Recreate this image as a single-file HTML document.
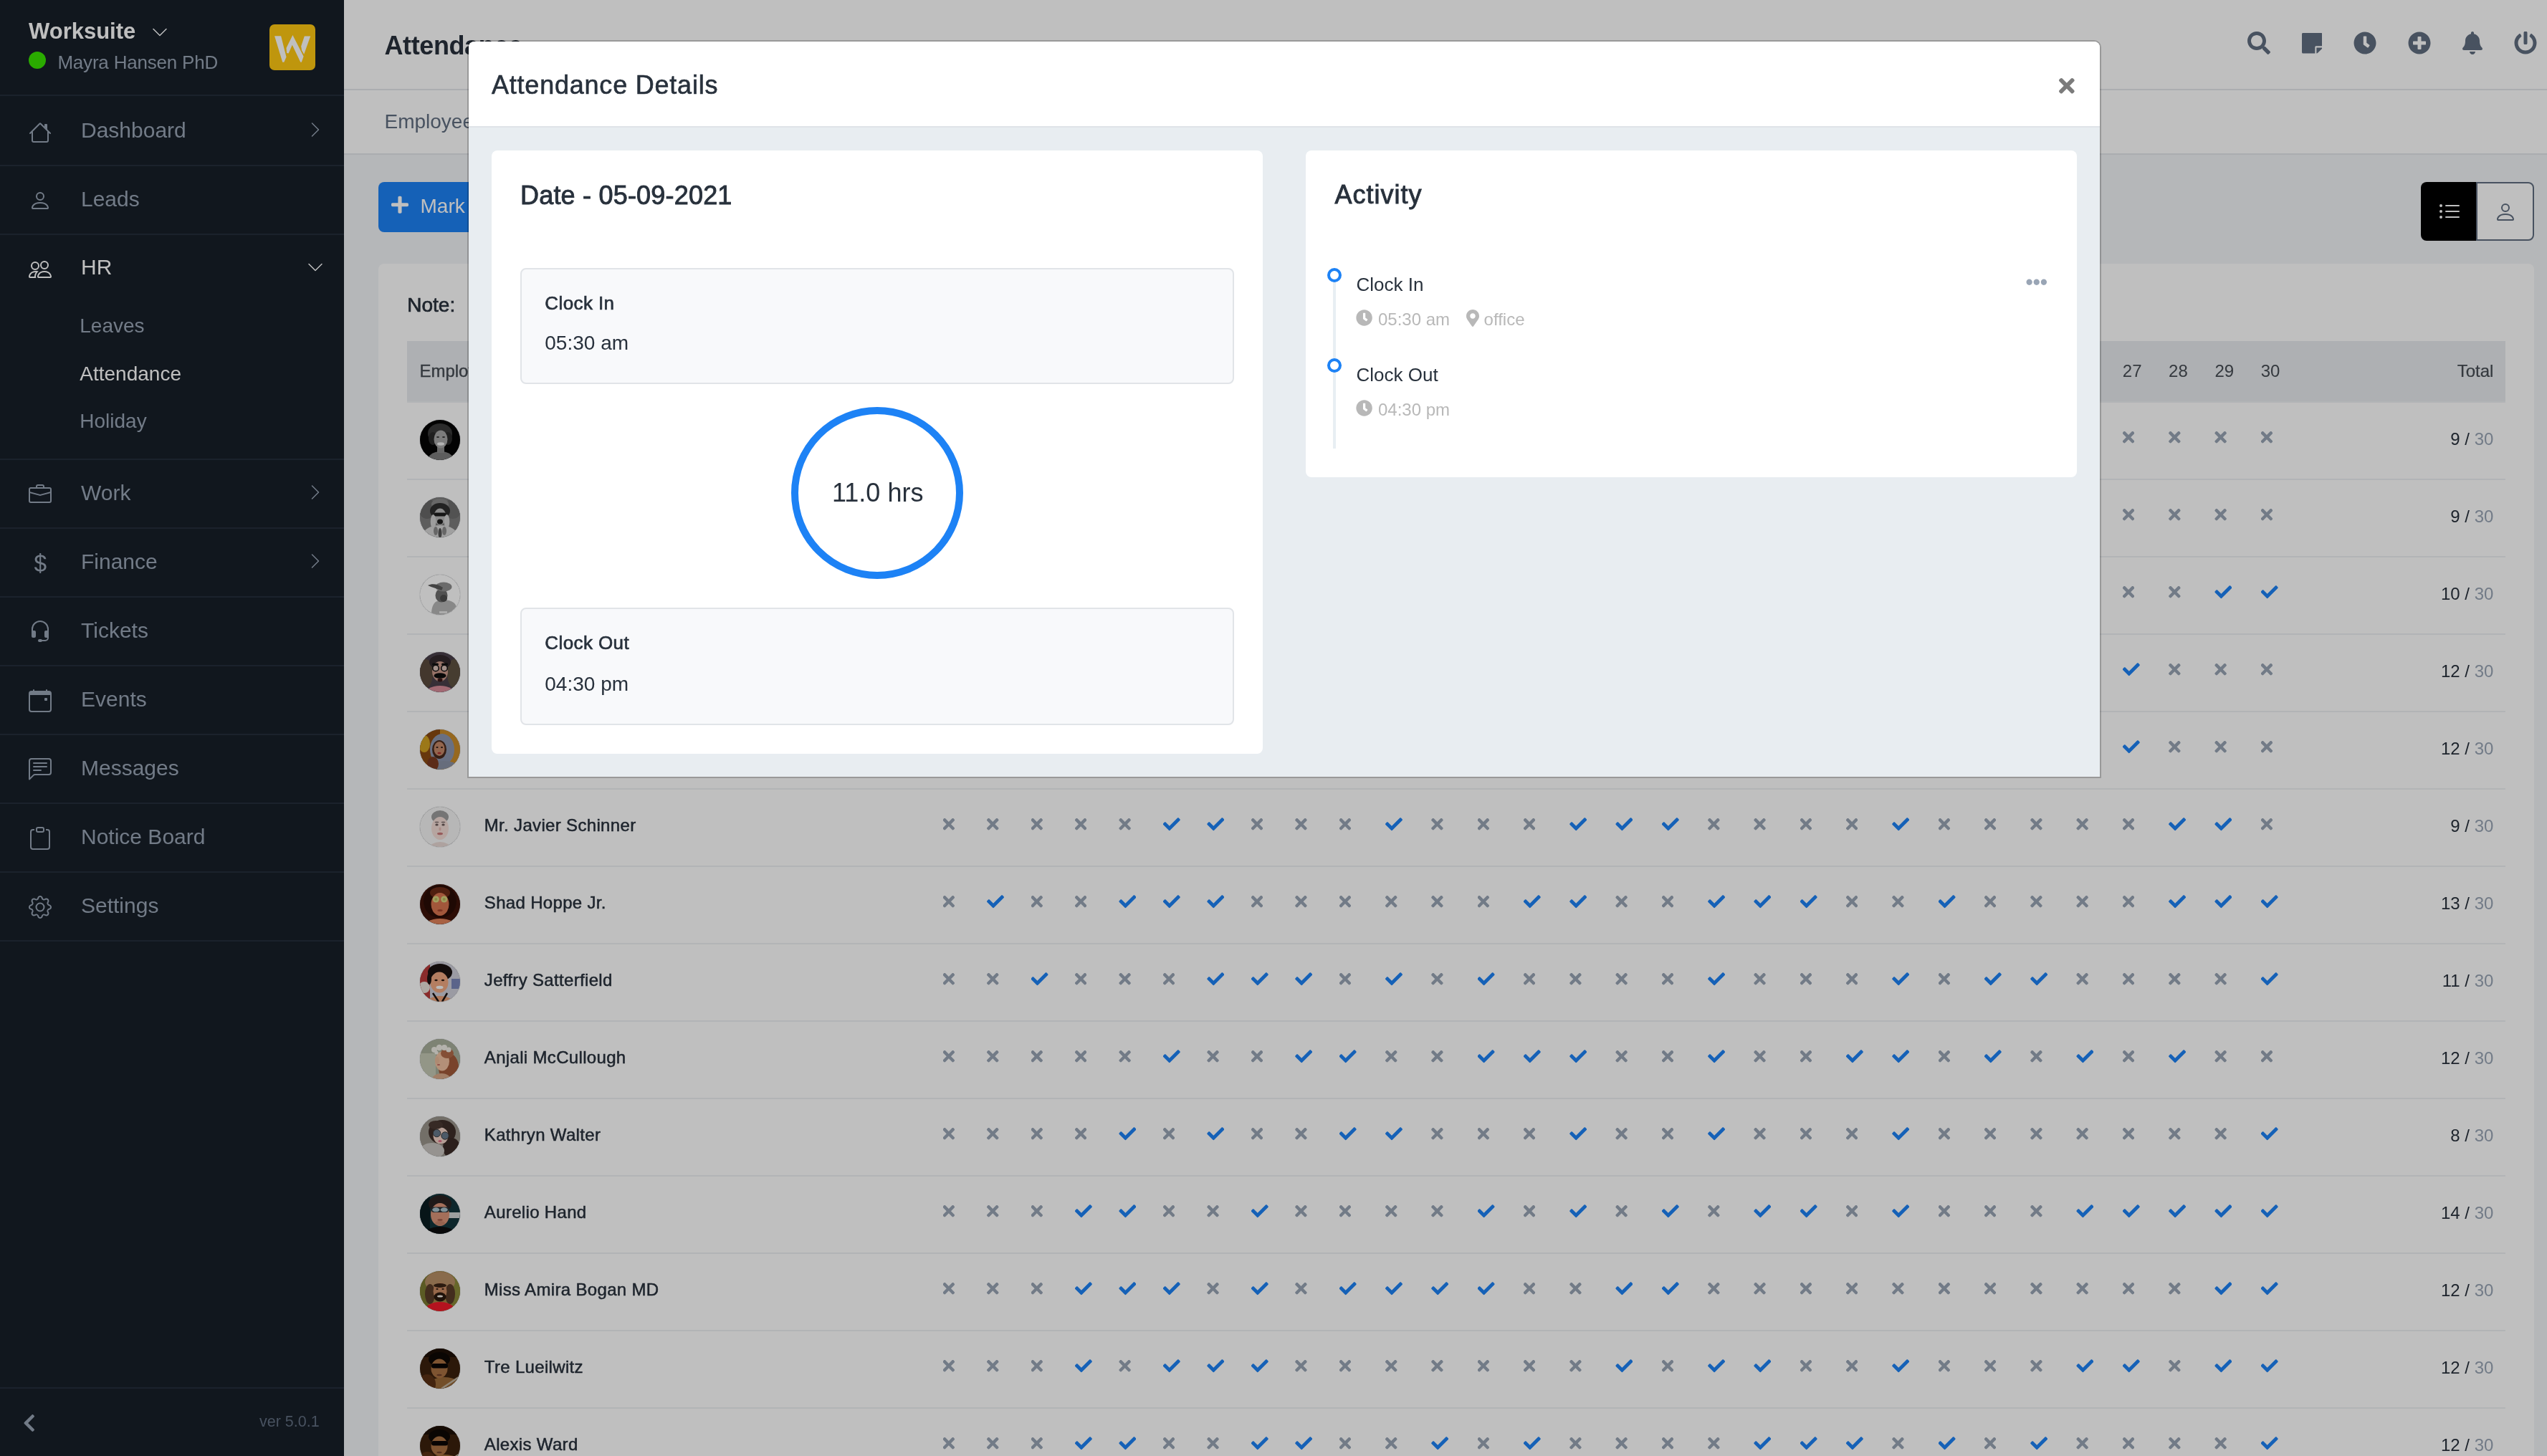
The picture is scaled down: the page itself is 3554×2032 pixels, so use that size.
<!DOCTYPE html>
<html lang="en"><head><meta charset="utf-8"><title>Attendance</title>
<style>
html,body{margin:0;padding:0}
html{overflow:hidden}
body{width:3554px;height:2032px;overflow:hidden;position:relative;background:#f2f4f7;font-family:"Liberation Sans",sans-serif}
.t{position:absolute;line-height:1;white-space:nowrap}
.abs{position:absolute}
svg{display:block}
</style></head><body>
<div id="root" style="position:absolute;left:0;top:0;width:3554px;height:2032px;overflow:hidden;will-change:transform">

<div class="abs" style="left:480px;top:0;width:3074px;height:124px;background:#fff;border-bottom:2px solid #e4e7eb"></div>
<div class="abs" style="left:480px;top:126px;width:3074px;height:88px;background:#fff;border-bottom:2px solid #e4e7eb"></div>
<div class="t" style="left:536.5px;top:45.53px;font-size:36px;color:#28313c;font-weight:bold;letter-spacing:-0.4px">Attendance</div>
<div class="t" style="left:536.5px;top:155.90px;font-size:28px;color:#616e80;font-weight:normal;">Employee</div>
<svg style="position:absolute;left:3136px;top:44px;" width="32.00" height="32" viewBox="0 0 512 512" fill="#616e80"><path d="M505 442.700L405.300 343c-4.500-4.500-10.600-7-17-7H372c27.600-35.300 44-79.700 44-128C416 93.100 322.900 0 208 0S0 93.100 0 208s93.100 208 208 208c48.300 0 92.700-16.400 128-44v16.300c0 6.400 2.500 12.500 7 17l99.700 99.700c9.400 9.400 24.600 9.400 33.900 0l28.300-28.300c9.400-9.400 9.400-24.600.100-34zM208 336c-70.700 0-128-57.200-128-128 0-70.700 57.200-128 128-128 70.700 0 128 57.200 128 128 0 70.700-57.200 128-128 128z"/></svg>
<svg style="position:absolute;left:3211.7px;top:43.6px;" width="28.53" height="32.6" viewBox="0 0 448 512" fill="#616e80"><path d="M312 320h136V56c0-13.300-10.700-24-24-24H24C10.700 32 0 42.700 0 56v400c0 13.300 10.700 24 24 24h264V344c0-13.200 10.800-24 24-24zm129 55l-98 98c-4.500 4.500-10.600 7-17 7h-6V352h128v6.100c0 6.300-2.500 12.400-7 16.900z"/></svg>
<svg style="position:absolute;left:3284px;top:44px;" width="32.00" height="32" viewBox="0 0 512 512" fill="#616e80"><path d="M256 8C119 8 8 119 8 256s111 248 248 248 248-111 248-248S393 8 256 8zm57.100 350.100L224.900 294c-3.100-2.300-4.900-5.900-4.900-9.700V116c0-6.600 5.400-12 12-12h48c6.600 0 12 5.400 12 12v137.700l63.500 46.200c5.400 3.900 6.500 11.400 2.600 16.800l-28.200 38.800c-3.900 5.300-11.400 6.500-16.800 2.600z"/></svg>
<svg style="position:absolute;left:3360px;top:44px;" width="32.00" height="32" viewBox="0 0 512 512" fill="#616e80"><path d="M256 8C119 8 8 119 8 256s111 248 248 248 248-111 248-248S393 8 256 8zm144 276c0 6.600-5.400 12-12 12h-92v92c0 6.600-5.400 12-12 12h-56c-6.600 0-12-5.400-12-12v-92h-92c-6.600 0-12-5.400-12-12v-56c0-6.600 5.400-12 12-12h92v-92c0-6.600 5.400-12 12-12h56c6.600 0 12 5.400 12 12v92h92c6.600 0 12 5.400 12 12v56z"/></svg>
<svg style="position:absolute;left:3435.8px;top:44px;" width="28.00" height="32" viewBox="0 0 448 512" fill="#616e80"><path d="M224 512c35.320 0 63.970-28.650 63.970-64H160.030c0 35.350 28.650 64 63.970 64zm215.390-149.710c-19.320-20.760-55.470-51.990-55.470-154.290 0-77.700-54.480-139.900-127.940-155.160V32c0-17.670-14.320-32-31.980-32s-31.980 14.330-31.980 32v20.840C118.560 68.100 64.080 130.300 64.080 208c0 102.300-36.150 133.530-55.470 154.290-6 6.450-8.660 14.160-8.610 21.710.110 16.400 12.980 32 32.100 32h383.800c19.120 0 32-15.600 32.100-32 .050-7.550-2.610-15.270-8.610-21.710z"/></svg>
<svg style="position:absolute;left:3508px;top:44px;" width="32.00" height="32" viewBox="0 0 512 512" fill="#616e80"><path d="M400 54.100c63 45 104 118.600 104 201.900 0 136.800-110.800 247.700-247.500 248C120 504.300 8.200 393 8 256.400 7.900 173.100 48.900 99.300 111.800 54.200c11.700-8.300 28-4.800 35 7.700L162.600 90c5.900 10.500 3.100 23.800-6.600 31-41.500 30.800-68 79.600-68 134.900-.100 92.300 74.500 168.100 168 168.100 91.600 0 168.600-74.200 168-169.100-.300-51.800-24.700-101.800-68.100-134-9.700-7.200-12.400-20.500-6.500-30.900l15.800-28.100c7-12.400 23.200-16.100 34.800-7.800zM296 264V24c0-13.300-10.700-24-24-24h-32c-13.300 0-24 10.700-24 24v240c0 13.300 10.700 24 24 24h32c13.300 0 24-10.700 24-24z"/></svg>
<div class="abs" style="left:528px;top:254px;width:330px;height:70px;border-radius:8px;background:#1d82f5"></div>
<svg style="position:absolute;left:546px;top:271.7px;" width="23.97" height="27.4" viewBox="0 0 448 512" fill="#fff"><path d="M416 208H272V64c0-17.670-14.330-32-32-32h-32c-17.670 0-32 14.330-32 32v144H32c-17.670 0-32 14.330-32 32v32c0 17.670 14.330 32 32 32h144v144c0 17.670 14.330 32 32 32h32c17.670 0 32-14.330 32-32V304h144c17.670 0 32-14.330 32-32v-32c0-17.670-14.330-32-32-32z"/></svg>
<div class="t" style="left:586.5px;top:274.00px;font-size:28px;color:#fff;font-weight:normal;">Mark Attendance</div>
<div class="abs" style="left:3378px;top:254px;width:79px;height:82px;background:#000;border-radius:8px 0 0 8px"></div>
<div class="abs" style="left:3455px;top:254px;width:77px;height:78px;border:2px solid #616e80;border-radius:0 8px 8px 0;background:#fff"></div>
<svg style="position:absolute;left:3402px;top:279.5px" width="32" height="32" viewBox="0 0 16 16" fill="#fff"><path fill-rule="evenodd" d="M5 11.500a.5.5 0 0 1 .5-.5h9a.5.5 0 0 1 0 1h-9a.5.5 0 0 1-.5-.5zm0-4a.5.5 0 0 1 .5-.5h9a.5.5 0 0 1 0 1h-9a.5.5 0 0 1-.5-.5zm0-4a.5.5 0 0 1 .5-.5h9a.5.5 0 0 1 0 1h-9a.5.5 0 0 1-.5-.5zm-3 1a1 1 0 1 0 0-2 1 1 0 0 0 0 2zm0 4a1 1 0 1 0 0-2 1 1 0 0 0 0 2zm0 4a1 1 0 1 0 0-2 1 1 0 0 0 0 2z"/></svg>
<svg style="position:absolute;left:3480px;top:280px" width="32" height="32" viewBox="0 0 16 16" fill="#616e80"><path d="M8 8a3 3 0 1 0 0-6 3 3 0 0 0 0 6zm2-3a2 2 0 1 1-4 0 2 2 0 0 1 4 0zm4 8c0 1-1 1-1 1H3s-1 0-1-1 1-4 6-4 6 3 6 4zm-1-.004c-.001-.246-.154-.986-.832-1.664C11.516 10.68 10.289 10 8 10c-2.29 0-3.516.68-4.168 1.332-.678.678-.83 1.418-.832 1.664h10z"/></svg>
<div class="abs" style="left:528px;top:368px;width:3008px;height:1664px;background:#fff;border-radius:8px 8px 0 0"></div>
<div class="t" style="left:568.3px;top:412.30px;font-size:28px;color:#28313c;font-weight:normal;-webkit-text-stroke:0.7px #28313c">Note:</div>
<div class="abs" style="left:568px;top:476px;width:2928px;height:84px;background:#e8ebef;border-bottom:2px solid #eef0f3"></div>
<div class="t" style="left:585.4px;top:505.88px;font-size:24px;color:#474d54;font-weight:normal;-webkit-text-stroke:0.4px #474d54">Employee</div>
<div class="t" style="left:1315.6px;top:505.88px;font-size:24px;color:#474d54;font-weight:normal;">1</div>
<div class="t" style="left:1377.0px;top:505.88px;font-size:24px;color:#474d54;font-weight:normal;">2</div>
<div class="t" style="left:1438.5px;top:505.88px;font-size:24px;color:#474d54;font-weight:normal;">3</div>
<div class="t" style="left:1499.9px;top:505.88px;font-size:24px;color:#474d54;font-weight:normal;">4</div>
<div class="t" style="left:1561.4px;top:505.88px;font-size:24px;color:#474d54;font-weight:normal;">5</div>
<div class="t" style="left:1622.8px;top:505.88px;font-size:24px;color:#474d54;font-weight:normal;">6</div>
<div class="t" style="left:1684.3px;top:505.88px;font-size:24px;color:#474d54;font-weight:normal;">7</div>
<div class="t" style="left:1745.8px;top:505.88px;font-size:24px;color:#474d54;font-weight:normal;">8</div>
<div class="t" style="left:1807.2px;top:505.88px;font-size:24px;color:#474d54;font-weight:normal;">9</div>
<div class="t" style="left:1868.7px;top:505.88px;font-size:24px;color:#474d54;font-weight:normal;">10</div>
<div class="t" style="left:1933.0px;top:505.88px;font-size:24px;color:#474d54;font-weight:normal;">11</div>
<div class="t" style="left:1997.2px;top:505.88px;font-size:24px;color:#474d54;font-weight:normal;">12</div>
<div class="t" style="left:2061.6px;top:505.88px;font-size:24px;color:#474d54;font-weight:normal;">13</div>
<div class="t" style="left:2125.8px;top:505.88px;font-size:24px;color:#474d54;font-weight:normal;">14</div>
<div class="t" style="left:2190.2px;top:505.88px;font-size:24px;color:#474d54;font-weight:normal;">15</div>
<div class="t" style="left:2254.4px;top:505.88px;font-size:24px;color:#474d54;font-weight:normal;">16</div>
<div class="t" style="left:2318.8px;top:505.88px;font-size:24px;color:#474d54;font-weight:normal;">17</div>
<div class="t" style="left:2383.1px;top:505.88px;font-size:24px;color:#474d54;font-weight:normal;">18</div>
<div class="t" style="left:2447.3px;top:505.88px;font-size:24px;color:#474d54;font-weight:normal;">19</div>
<div class="t" style="left:2511.7px;top:505.88px;font-size:24px;color:#474d54;font-weight:normal;">20</div>
<div class="t" style="left:2575.9px;top:505.88px;font-size:24px;color:#474d54;font-weight:normal;">21</div>
<div class="t" style="left:2640.2px;top:505.88px;font-size:24px;color:#474d54;font-weight:normal;">22</div>
<div class="t" style="left:2704.6px;top:505.88px;font-size:24px;color:#474d54;font-weight:normal;">23</div>
<div class="t" style="left:2768.8px;top:505.88px;font-size:24px;color:#474d54;font-weight:normal;">24</div>
<div class="t" style="left:2833.2px;top:505.88px;font-size:24px;color:#474d54;font-weight:normal;">25</div>
<div class="t" style="left:2897.4px;top:505.88px;font-size:24px;color:#474d54;font-weight:normal;">26</div>
<div class="t" style="left:2961.8px;top:505.88px;font-size:24px;color:#474d54;font-weight:normal;">27</div>
<div class="t" style="left:3026.1px;top:505.88px;font-size:24px;color:#474d54;font-weight:normal;">28</div>
<div class="t" style="left:3090.4px;top:505.88px;font-size:24px;color:#474d54;font-weight:normal;">29</div>
<div class="t" style="left:3154.7px;top:505.88px;font-size:24px;color:#474d54;font-weight:normal;">30</div>
<div class="t" style="right:74.59999999999991px;top:505.88px;font-size:24px;color:#474d54;font-weight:normal;-webkit-text-stroke:0.2px #474d54">Total</div>
<style>.ix,.ic{position:absolute;height:24px}.ix{width:16.5px;background:#99a5b5;clip-path:path("M 11.377 12 l 4.691 -4.691 c 0.576 -0.576 0.576 -1.509 0 -2.085 l -1.042 -1.042 c -0.576 -0.576 -1.509 -0.576 -2.085 0 L 8.25 8.873 3.559 4.182 c -0.576 -0.576 -1.509 -0.576 -2.085 0 L 0.432 5.224 c -0.576 0.576 -0.576 1.509 0 2.085 L 5.123 12 0.432 16.691 c -0.576 0.576 -0.576 1.509 0 2.085 l 1.042 1.042 c 0.576 0.576 1.509 0.576 2.085 0 L 8.25 15.128 l 4.691 4.691 c 0.576 0.576 1.509 0.576 2.085 0 l 1.042 -1.042 c 0.576 -0.576 0.576 -1.509 0 -2.085 L 11.377 12 z")}.ic{width:24px;background:#1d82f5;clip-path:path("M 8.151 20.597 l -7.8 -7.8 c -0.469 -0.469 -0.469 -1.228 0 -1.697 l 1.697 -1.697 c 0.469 -0.469 1.228 -0.469 1.697 0 L 9 14.657 20.254 3.403 c 0.469 -0.469 1.228 -0.469 1.697 0 l 1.697 1.697 c 0.469 0.469 0.469 1.228 0 1.697 l -13.8 13.8 c -0.469 0.469 -1.228 0.469 -1.697 -0 z")}</style>
<div class="abs" style="left:568px;top:668px;width:2928px;height:2px;background:#eef0f3"></div>
<div class="abs av" id="av1" style="left:585px;top:585px;width:56px;height:56px;border-radius:50%;border:1px solid #f3f4f6;background:#888;overflow:hidden"><svg width="56" height="56" viewBox="0 0 56 56"><rect x="0" y="0" width="56" height="56" fill="#050505" /><ellipse cx="28" cy="19" rx="17" ry="14" fill="#3a3a3a" /><ellipse cx="18" cy="26" rx="6" ry="9" fill="#2a2a2a" /><ellipse cx="39" cy="26" rx="6" ry="9" fill="#2a2a2a" /><ellipse cx="29" cy="58" rx="19" ry="14" fill="#7c7c7c" /><rect x="24" y="36" width="10" height="10" fill="#8a8a8a" /><ellipse cx="29" cy="27" rx="9.5" ry="12.5" fill="#a6a6a6" /><ellipse cx="25" cy="24" rx="2" ry="1" fill="#333" /><ellipse cx="33" cy="24" rx="2" ry="1" fill="#333" /><ellipse cx="29" cy="33.5" rx="5" ry="2.2" fill="#f0f0f0" /></svg></div>
<i class="ix" style="left:2961.8px;top:598.2px"></i>
<i class="ix" style="left:3026.1px;top:598.2px"></i>
<i class="ix" style="left:3090.4px;top:598.2px"></i>
<i class="ix" style="left:3154.7px;top:598.2px"></i>
<div class="t" style="right:74.59999999999991px;top:601.08px;font-size:24px;color:#28313c">9 / <span style="color:#99a5b5">30</span></div>
<div class="abs" style="left:568px;top:776px;width:2928px;height:2px;background:#eef0f3"></div>
<div class="abs av" id="av2" style="left:585px;top:693px;width:56px;height:56px;border-radius:50%;border:1px solid #f3f4f6;background:#888;overflow:hidden"><svg width="56" height="56" viewBox="0 0 56 56"><rect x="0" y="0" width="56" height="56" fill="#7c7c7c" /><ellipse cx="10" cy="16" rx="12" ry="14" fill="#686868" /><ellipse cx="46" cy="16" rx="12" ry="14" fill="#6e6e6e" /><ellipse cx="28" cy="10" rx="12" ry="8" fill="#8a8a8a" /><ellipse cx="28" cy="56" rx="26" ry="17" fill="#d6d6d6" /><ellipse cx="28" cy="19" rx="14" ry="11" fill="#2e2e2e" /><ellipse cx="28" cy="27" rx="8.5" ry="11.5" fill="#b8b8b8" /><rect x="19.5" y="21.5" width="17" height="5" fill="#1c1c1c" rx="2.5"/><ellipse cx="28" cy="34" rx="4" ry="3.6" fill="#1e1e1e" /><ellipse cx="18.5" cy="34" rx="3.8" ry="10" fill="#d2d2d2" /><ellipse cx="37.5" cy="34" rx="3.8" ry="10" fill="#d2d2d2" /><ellipse cx="22" cy="47" rx="3" ry="6" fill="#8a8a8a" /><ellipse cx="34" cy="47" rx="3" ry="6" fill="#8a8a8a" /><ellipse cx="28" cy="50" rx="2.5" ry="7" fill="#555" /></svg></div>
<i class="ix" style="left:2961.8px;top:706.2px"></i>
<i class="ix" style="left:3026.1px;top:706.2px"></i>
<i class="ix" style="left:3090.4px;top:706.2px"></i>
<i class="ix" style="left:3154.7px;top:706.2px"></i>
<div class="t" style="right:74.59999999999991px;top:709.08px;font-size:24px;color:#28313c">9 / <span style="color:#99a5b5">30</span></div>
<div class="abs" style="left:568px;top:884px;width:2928px;height:2px;background:#eef0f3"></div>
<div class="abs av" id="av3" style="left:585px;top:801px;width:56px;height:56px;border-radius:50%;border:1px solid #f3f4f6;background:#888;overflow:hidden"><svg width="56" height="56" viewBox="0 0 56 56"><rect x="0" y="0" width="56" height="56" fill="#ffffff" /><path d="M20 40c3-5 18-7 27-1 4 3 5 9 5 17H16c0-7 1-12 4-16z" fill="#b6b6b6"/><ellipse cx="30" cy="29" rx="8.5" ry="9.5" fill="#6c6c6c" /><ellipse cx="33" cy="33" rx="5" ry="5" fill="#4e4e4e" /><ellipse cx="33" cy="17" rx="11.5" ry="6.5" fill="#8e8e8e" /><path d="M11 15c6-3 14-2 21 3l-2 4c-7-3-13-4-19-7z" fill="#585858"/><rect x="27" y="51" width="11" height="3" fill="#e6e6e6" /></svg></div>
<i class="ix" style="left:2961.8px;top:814.2px"></i>
<i class="ix" style="left:3026.1px;top:814.2px"></i>
<i class="ic" style="left:3090.4px;top:814.2px"></i>
<i class="ic" style="left:3154.7px;top:814.2px"></i>
<div class="t" style="right:74.59999999999991px;top:817.08px;font-size:24px;color:#28313c">10 / <span style="color:#99a5b5">30</span></div>
<div class="abs" style="left:568px;top:992px;width:2928px;height:2px;background:#eef0f3"></div>
<div class="abs av" id="av4" style="left:585px;top:909px;width:56px;height:56px;border-radius:50%;border:1px solid #f3f4f6;background:#888;overflow:hidden"><svg width="56" height="56" viewBox="0 0 56 56"><rect x="0" y="0" width="56" height="56" fill="#4a3f4a" /><ellipse cx="8" cy="30" rx="10" ry="20" fill="#5a4a3c" /><ellipse cx="48" cy="30" rx="10" ry="20" fill="#5e5240" /><ellipse cx="28" cy="14" rx="15" ry="10" fill="#33282c" /><ellipse cx="28" cy="60" rx="22" ry="13" fill="#d98c9a" /><ellipse cx="28" cy="27" rx="11" ry="14" fill="#c8988a" /><rect x="17" y="15.5" width="9" height="3" fill="#111" rx="1.5"/><rect x="30" y="15.5" width="9" height="3" fill="#111" rx="1.5"/><circle cx="22" cy="22.5" r="4.3" fill="#d8c0b8" stroke="#111" stroke-width="1.6"/><circle cx="34" cy="22.5" r="4.3" fill="#d8c0b8" stroke="#111" stroke-width="1.6"/><ellipse cx="28" cy="33" rx="8.5" ry="3.8" fill="#0c0c0c" /><ellipse cx="28" cy="39" rx="3.5" ry="2.5" fill="#3a1818" /></svg></div>
<i class="ic" style="left:2961.8px;top:922.2px"></i>
<i class="ix" style="left:3026.1px;top:922.2px"></i>
<i class="ix" style="left:3090.4px;top:922.2px"></i>
<i class="ix" style="left:3154.7px;top:922.2px"></i>
<div class="t" style="right:74.59999999999991px;top:925.08px;font-size:24px;color:#28313c">12 / <span style="color:#99a5b5">30</span></div>
<div class="abs" style="left:568px;top:1100px;width:2928px;height:2px;background:#eef0f3"></div>
<div class="abs av" id="av5" style="left:585px;top:1017px;width:56px;height:56px;border-radius:50%;border:1px solid #f3f4f6;background:#888;overflow:hidden"><svg width="56" height="56" viewBox="0 0 56 56"><rect x="0" y="0" width="28" height="56" fill="#8a4a12" /><rect x="28" y="0" width="28" height="56" fill="#c98b2a" /><ellipse cx="6" cy="20" rx="8" ry="12" fill="#d0a020" /><ellipse cx="31" cy="28" rx="17" ry="22" fill="#8d96ae" /><ellipse cx="34" cy="56" rx="22" ry="12" fill="#8a92a6" /><ellipse cx="27" cy="28" rx="10" ry="13" fill="#4a2a1c" /><ellipse cx="27" cy="27" rx="7.5" ry="10" fill="#c48868" /><ellipse cx="27" cy="33" rx="2.6" ry="1.3" fill="#b03030" /><ellipse cx="24" cy="25" rx="1.6" ry="0.9" fill="#2a1a14" /><ellipse cx="30.5" cy="25" rx="1.6" ry="0.9" fill="#2a1a14" /><ellipse cx="18" cy="48" rx="8" ry="10" fill="#7a3a20" /></svg></div>
<i class="ic" style="left:2961.8px;top:1030.2px"></i>
<i class="ix" style="left:3026.1px;top:1030.2px"></i>
<i class="ix" style="left:3090.4px;top:1030.2px"></i>
<i class="ix" style="left:3154.7px;top:1030.2px"></i>
<div class="t" style="right:74.59999999999991px;top:1033.08px;font-size:24px;color:#28313c">12 / <span style="color:#99a5b5">30</span></div>
<div class="abs" style="left:568px;top:1208px;width:2928px;height:2px;background:#eef0f3"></div>
<div class="abs av" id="av6" style="left:585px;top:1125px;width:56px;height:56px;border-radius:50%;border:1px solid #f3f4f6;background:#888;overflow:hidden"><svg width="56" height="56" viewBox="0 0 56 56"><rect x="0" y="0" width="56" height="56" fill="#f4f4f4" /><ellipse cx="28" cy="14" rx="12" ry="9" fill="#9c9c9c" /><ellipse cx="28" cy="58" rx="15" ry="9" fill="#e8d8d4" /><ellipse cx="28" cy="30" rx="12" ry="16" fill="#f3dcd6" /><ellipse cx="23.5" cy="25" rx="2.2" ry="1.6" fill="#6a5a58" /><ellipse cx="32.5" cy="25" rx="2.2" ry="1.6" fill="#6a5a58" /><ellipse cx="23.5" cy="21.5" rx="3" ry="0.9" fill="#8a7a78" /><ellipse cx="32.5" cy="21.5" rx="3" ry="0.9" fill="#8a7a78" /><ellipse cx="28" cy="37.5" rx="4" ry="1.8" fill="#c87878" /><ellipse cx="28" cy="31" rx="1.6" ry="2.4" fill="#e4bcb4" /></svg></div>
<div class="t" style="left:675.8px;top:1139.68px;font-size:24px;color:#28313c;font-weight:normal;letter-spacing:0.33px;-webkit-text-stroke:0.5px #28313c">Mr. Javier Schinner</div>
<i class="ix" style="left:1315.6px;top:1138.2px"></i>
<i class="ix" style="left:1377.0px;top:1138.2px"></i>
<i class="ix" style="left:1438.5px;top:1138.2px"></i>
<i class="ix" style="left:1499.9px;top:1138.2px"></i>
<i class="ix" style="left:1561.4px;top:1138.2px"></i>
<i class="ic" style="left:1622.8px;top:1138.2px"></i>
<i class="ic" style="left:1684.3px;top:1138.2px"></i>
<i class="ix" style="left:1745.8px;top:1138.2px"></i>
<i class="ix" style="left:1807.2px;top:1138.2px"></i>
<i class="ix" style="left:1868.7px;top:1138.2px"></i>
<i class="ic" style="left:1933.0px;top:1138.2px"></i>
<i class="ix" style="left:1997.2px;top:1138.2px"></i>
<i class="ix" style="left:2061.6px;top:1138.2px"></i>
<i class="ix" style="left:2125.8px;top:1138.2px"></i>
<i class="ic" style="left:2190.2px;top:1138.2px"></i>
<i class="ic" style="left:2254.4px;top:1138.2px"></i>
<i class="ic" style="left:2318.8px;top:1138.2px"></i>
<i class="ix" style="left:2383.1px;top:1138.2px"></i>
<i class="ix" style="left:2447.3px;top:1138.2px"></i>
<i class="ix" style="left:2511.7px;top:1138.2px"></i>
<i class="ix" style="left:2575.9px;top:1138.2px"></i>
<i class="ic" style="left:2640.2px;top:1138.2px"></i>
<i class="ix" style="left:2704.6px;top:1138.2px"></i>
<i class="ix" style="left:2768.8px;top:1138.2px"></i>
<i class="ix" style="left:2833.2px;top:1138.2px"></i>
<i class="ix" style="left:2897.4px;top:1138.2px"></i>
<i class="ix" style="left:2961.8px;top:1138.2px"></i>
<i class="ic" style="left:3026.1px;top:1138.2px"></i>
<i class="ic" style="left:3090.4px;top:1138.2px"></i>
<i class="ix" style="left:3154.7px;top:1138.2px"></i>
<div class="t" style="right:74.59999999999991px;top:1141.08px;font-size:24px;color:#28313c">9 / <span style="color:#99a5b5">30</span></div>
<div class="abs" style="left:568px;top:1316px;width:2928px;height:2px;background:#eef0f3"></div>
<div class="abs av" id="av7" style="left:585px;top:1233px;width:56px;height:56px;border-radius:50%;border:1px solid #f3f4f6;background:#888;overflow:hidden"><svg width="56" height="56" viewBox="0 0 56 56"><rect x="0" y="0" width="56" height="56" fill="#3c1209" /><ellipse cx="28" cy="24" rx="23" ry="23" fill="#2a0c06" /><ellipse cx="28" cy="12" rx="14" ry="8" fill="#6a2a16" /><ellipse cx="28" cy="62" rx="24" ry="14" fill="#e0825a" /><ellipse cx="28" cy="28" rx="12.5" ry="16" fill="#d9754f" /><circle cx="22.3" cy="21" r="4.6" fill="#d6d47e"/><circle cx="33.700" cy="21" r="4.6" fill="#d6d47e"/><circle cx="22.3" cy="21" r="2" fill="#b8b45e"/><circle cx="33.700" cy="21" r="2" fill="#b8b45e"/><ellipse cx="28" cy="36.5" rx="3.6" ry="1.5" fill="#a84830" /></svg></div>
<div class="t" style="left:675.8px;top:1247.68px;font-size:24px;color:#28313c;font-weight:normal;letter-spacing:0.33px;-webkit-text-stroke:0.5px #28313c">Shad Hoppe Jr.</div>
<i class="ix" style="left:1315.6px;top:1246.2px"></i>
<i class="ic" style="left:1377.0px;top:1246.2px"></i>
<i class="ix" style="left:1438.5px;top:1246.2px"></i>
<i class="ix" style="left:1499.9px;top:1246.2px"></i>
<i class="ic" style="left:1561.4px;top:1246.2px"></i>
<i class="ic" style="left:1622.8px;top:1246.2px"></i>
<i class="ic" style="left:1684.3px;top:1246.2px"></i>
<i class="ix" style="left:1745.8px;top:1246.2px"></i>
<i class="ix" style="left:1807.2px;top:1246.2px"></i>
<i class="ix" style="left:1868.7px;top:1246.2px"></i>
<i class="ix" style="left:1933.0px;top:1246.2px"></i>
<i class="ix" style="left:1997.2px;top:1246.2px"></i>
<i class="ix" style="left:2061.6px;top:1246.2px"></i>
<i class="ic" style="left:2125.8px;top:1246.2px"></i>
<i class="ic" style="left:2190.2px;top:1246.2px"></i>
<i class="ix" style="left:2254.4px;top:1246.2px"></i>
<i class="ix" style="left:2318.8px;top:1246.2px"></i>
<i class="ic" style="left:2383.1px;top:1246.2px"></i>
<i class="ic" style="left:2447.3px;top:1246.2px"></i>
<i class="ic" style="left:2511.7px;top:1246.2px"></i>
<i class="ix" style="left:2575.9px;top:1246.2px"></i>
<i class="ix" style="left:2640.2px;top:1246.2px"></i>
<i class="ic" style="left:2704.6px;top:1246.2px"></i>
<i class="ix" style="left:2768.8px;top:1246.2px"></i>
<i class="ix" style="left:2833.2px;top:1246.2px"></i>
<i class="ix" style="left:2897.4px;top:1246.2px"></i>
<i class="ix" style="left:2961.8px;top:1246.2px"></i>
<i class="ic" style="left:3026.1px;top:1246.2px"></i>
<i class="ic" style="left:3090.4px;top:1246.2px"></i>
<i class="ic" style="left:3154.7px;top:1246.2px"></i>
<div class="t" style="right:74.59999999999991px;top:1249.08px;font-size:24px;color:#28313c">13 / <span style="color:#99a5b5">30</span></div>
<div class="abs" style="left:568px;top:1424px;width:2928px;height:2px;background:#eef0f3"></div>
<div class="abs av" id="av8" style="left:585px;top:1341px;width:56px;height:56px;border-radius:50%;border:1px solid #f3f4f6;background:#888;overflow:hidden"><svg width="56" height="56" viewBox="0 0 56 56"><rect x="0" y="0" width="14" height="56" fill="#b83a3a" /><rect x="14" y="0" width="42" height="56" fill="#cfcfda" /><rect x="44" y="24" width="12" height="14" fill="#7a86b8" /><ellipse cx="6" cy="36" rx="8" ry="8" fill="#e8e0d8" /><ellipse cx="28" cy="15" rx="17" ry="12" fill="#1a1210" /><ellipse cx="28" cy="60" rx="20" ry="12" fill="#e8a078" /><ellipse cx="27" cy="29" rx="12.5" ry="14.5" fill="#f0a982" /><ellipse cx="22.5" cy="26" rx="2.2" ry="1.2" fill="#2a1810" /><ellipse cx="32" cy="26" rx="2.2" ry="1.2" fill="#2a1810" /><ellipse cx="27.5" cy="36" rx="5" ry="2.2" fill="#fafafa" /><path d="M18 44l8 12M38 44l-7 12" stroke="#1a1210" stroke-width="2.5"/><ellipse cx="13" cy="24" rx="3" ry="8" fill="#1a1210" /></svg></div>
<div class="t" style="left:675.8px;top:1355.68px;font-size:24px;color:#28313c;font-weight:normal;letter-spacing:0.33px;-webkit-text-stroke:0.5px #28313c">Jeffry Satterfield</div>
<i class="ix" style="left:1315.6px;top:1354.2px"></i>
<i class="ix" style="left:1377.0px;top:1354.2px"></i>
<i class="ic" style="left:1438.5px;top:1354.2px"></i>
<i class="ix" style="left:1499.9px;top:1354.2px"></i>
<i class="ix" style="left:1561.4px;top:1354.2px"></i>
<i class="ix" style="left:1622.8px;top:1354.2px"></i>
<i class="ic" style="left:1684.3px;top:1354.2px"></i>
<i class="ic" style="left:1745.8px;top:1354.2px"></i>
<i class="ic" style="left:1807.2px;top:1354.2px"></i>
<i class="ix" style="left:1868.7px;top:1354.2px"></i>
<i class="ic" style="left:1933.0px;top:1354.2px"></i>
<i class="ix" style="left:1997.2px;top:1354.2px"></i>
<i class="ic" style="left:2061.6px;top:1354.2px"></i>
<i class="ix" style="left:2125.8px;top:1354.2px"></i>
<i class="ix" style="left:2190.2px;top:1354.2px"></i>
<i class="ix" style="left:2254.4px;top:1354.2px"></i>
<i class="ix" style="left:2318.8px;top:1354.2px"></i>
<i class="ic" style="left:2383.1px;top:1354.2px"></i>
<i class="ix" style="left:2447.3px;top:1354.2px"></i>
<i class="ix" style="left:2511.7px;top:1354.2px"></i>
<i class="ix" style="left:2575.9px;top:1354.2px"></i>
<i class="ic" style="left:2640.2px;top:1354.2px"></i>
<i class="ix" style="left:2704.6px;top:1354.2px"></i>
<i class="ic" style="left:2768.8px;top:1354.2px"></i>
<i class="ic" style="left:2833.2px;top:1354.2px"></i>
<i class="ix" style="left:2897.4px;top:1354.2px"></i>
<i class="ix" style="left:2961.8px;top:1354.2px"></i>
<i class="ix" style="left:3026.1px;top:1354.2px"></i>
<i class="ix" style="left:3090.4px;top:1354.2px"></i>
<i class="ic" style="left:3154.7px;top:1354.2px"></i>
<div class="t" style="right:74.59999999999991px;top:1357.08px;font-size:24px;color:#28313c">11 / <span style="color:#99a5b5">30</span></div>
<div class="abs" style="left:568px;top:1532px;width:2928px;height:2px;background:#eef0f3"></div>
<div class="abs av" id="av9" style="left:585px;top:1449px;width:56px;height:56px;border-radius:50%;border:1px solid #f3f4f6;background:#888;overflow:hidden"><svg width="56" height="56" viewBox="0 0 56 56"><rect x="0" y="0" width="56" height="56" fill="#a9af9b" /><rect x="0" y="20" width="22" height="36" fill="#c4c8b4" /><ellipse cx="40" cy="40" rx="14" ry="20" fill="#a25a3a" /><ellipse cx="31" cy="31" rx="10" ry="13.5" fill="#efc0a0" /><ellipse cx="24" cy="30" rx="3" ry="5" fill="#e8b898" /><ellipse cx="38" cy="20" rx="9" ry="7" fill="#b06a48" /><g fill="#f0eee6"><circle cx="20" cy="15" r="4"/><circle cx="27" cy="12" r="4.2"/><circle cx="34" cy="12" r="4"/><circle cx="40" cy="15" r="3.600"/><circle cx="23" cy="19" r="2.6"/></g><ellipse cx="26" cy="36" rx="2.2" ry="1.1" fill="#c06a60" /><ellipse cx="30" cy="58" rx="14" ry="10" fill="#d8a888" /></svg></div>
<div class="t" style="left:675.8px;top:1463.68px;font-size:24px;color:#28313c;font-weight:normal;letter-spacing:0.33px;-webkit-text-stroke:0.5px #28313c">Anjali McCullough</div>
<i class="ix" style="left:1315.6px;top:1462.2px"></i>
<i class="ix" style="left:1377.0px;top:1462.2px"></i>
<i class="ix" style="left:1438.5px;top:1462.2px"></i>
<i class="ix" style="left:1499.9px;top:1462.2px"></i>
<i class="ix" style="left:1561.4px;top:1462.2px"></i>
<i class="ic" style="left:1622.8px;top:1462.2px"></i>
<i class="ix" style="left:1684.3px;top:1462.2px"></i>
<i class="ix" style="left:1745.8px;top:1462.2px"></i>
<i class="ic" style="left:1807.2px;top:1462.2px"></i>
<i class="ic" style="left:1868.7px;top:1462.2px"></i>
<i class="ix" style="left:1933.0px;top:1462.2px"></i>
<i class="ix" style="left:1997.2px;top:1462.2px"></i>
<i class="ic" style="left:2061.6px;top:1462.2px"></i>
<i class="ic" style="left:2125.8px;top:1462.2px"></i>
<i class="ic" style="left:2190.2px;top:1462.2px"></i>
<i class="ix" style="left:2254.4px;top:1462.2px"></i>
<i class="ix" style="left:2318.8px;top:1462.2px"></i>
<i class="ic" style="left:2383.1px;top:1462.2px"></i>
<i class="ix" style="left:2447.3px;top:1462.2px"></i>
<i class="ix" style="left:2511.7px;top:1462.2px"></i>
<i class="ic" style="left:2575.9px;top:1462.2px"></i>
<i class="ic" style="left:2640.2px;top:1462.2px"></i>
<i class="ix" style="left:2704.6px;top:1462.2px"></i>
<i class="ic" style="left:2768.8px;top:1462.2px"></i>
<i class="ix" style="left:2833.2px;top:1462.2px"></i>
<i class="ic" style="left:2897.4px;top:1462.2px"></i>
<i class="ix" style="left:2961.8px;top:1462.2px"></i>
<i class="ic" style="left:3026.1px;top:1462.2px"></i>
<i class="ix" style="left:3090.4px;top:1462.2px"></i>
<i class="ix" style="left:3154.7px;top:1462.2px"></i>
<div class="t" style="right:74.59999999999991px;top:1465.08px;font-size:24px;color:#28313c">12 / <span style="color:#99a5b5">30</span></div>
<div class="abs" style="left:568px;top:1640px;width:2928px;height:2px;background:#eef0f3"></div>
<div class="abs av" id="av10" style="left:585px;top:1557px;width:56px;height:56px;border-radius:50%;border:1px solid #f3f4f6;background:#888;overflow:hidden"><svg width="56" height="56" viewBox="0 0 56 56"><rect x="0" y="0" width="56" height="56" fill="#9a948b" /><ellipse cx="31" cy="22" rx="19" ry="17" fill="#3e2e28" /><ellipse cx="44" cy="44" rx="12" ry="14" fill="#3a2a26" /><ellipse cx="17" cy="48" rx="17" ry="11" fill="#c9c5c0" /><ellipse cx="29" cy="27" rx="10.5" ry="11.5" fill="#f0d2c6" /><circle cx="23.500" cy="23.500" r="5.2" fill="#66788a" stroke="#3a3a3a" stroke-width="1"/><circle cx="35" cy="27" r="5.2" fill="#66788a" stroke="#3a3a3a" stroke-width="1"/><ellipse cx="28" cy="34.5" rx="2.6" ry="1.6" fill="#e07088" /><ellipse cx="22" cy="12" rx="10" ry="6" fill="#4a3832" /></svg></div>
<div class="t" style="left:675.8px;top:1571.68px;font-size:24px;color:#28313c;font-weight:normal;letter-spacing:0.33px;-webkit-text-stroke:0.5px #28313c">Kathryn Walter</div>
<i class="ix" style="left:1315.6px;top:1570.2px"></i>
<i class="ix" style="left:1377.0px;top:1570.2px"></i>
<i class="ix" style="left:1438.5px;top:1570.2px"></i>
<i class="ix" style="left:1499.9px;top:1570.2px"></i>
<i class="ic" style="left:1561.4px;top:1570.2px"></i>
<i class="ix" style="left:1622.8px;top:1570.2px"></i>
<i class="ic" style="left:1684.3px;top:1570.2px"></i>
<i class="ix" style="left:1745.8px;top:1570.2px"></i>
<i class="ix" style="left:1807.2px;top:1570.2px"></i>
<i class="ic" style="left:1868.7px;top:1570.2px"></i>
<i class="ic" style="left:1933.0px;top:1570.2px"></i>
<i class="ix" style="left:1997.2px;top:1570.2px"></i>
<i class="ix" style="left:2061.6px;top:1570.2px"></i>
<i class="ix" style="left:2125.8px;top:1570.2px"></i>
<i class="ic" style="left:2190.2px;top:1570.2px"></i>
<i class="ix" style="left:2254.4px;top:1570.2px"></i>
<i class="ix" style="left:2318.8px;top:1570.2px"></i>
<i class="ic" style="left:2383.1px;top:1570.2px"></i>
<i class="ix" style="left:2447.3px;top:1570.2px"></i>
<i class="ix" style="left:2511.7px;top:1570.2px"></i>
<i class="ix" style="left:2575.9px;top:1570.2px"></i>
<i class="ic" style="left:2640.2px;top:1570.2px"></i>
<i class="ix" style="left:2704.6px;top:1570.2px"></i>
<i class="ix" style="left:2768.8px;top:1570.2px"></i>
<i class="ix" style="left:2833.2px;top:1570.2px"></i>
<i class="ix" style="left:2897.4px;top:1570.2px"></i>
<i class="ix" style="left:2961.8px;top:1570.2px"></i>
<i class="ix" style="left:3026.1px;top:1570.2px"></i>
<i class="ix" style="left:3090.4px;top:1570.2px"></i>
<i class="ic" style="left:3154.7px;top:1570.2px"></i>
<div class="t" style="right:74.59999999999991px;top:1573.08px;font-size:24px;color:#28313c">8 / <span style="color:#99a5b5">30</span></div>
<div class="abs" style="left:568px;top:1748px;width:2928px;height:2px;background:#eef0f3"></div>
<div class="abs av" id="av11" style="left:585px;top:1665px;width:56px;height:56px;border-radius:50%;border:1px solid #f3f4f6;background:#888;overflow:hidden"><svg width="56" height="56" viewBox="0 0 56 56"><rect x="0" y="0" width="56" height="56" fill="#12353b" /><rect x="40" y="26" width="16" height="8" fill="#d0d4d4" /><rect x="0" y="0" width="14" height="56" fill="#0a1c20" /><ellipse cx="28" cy="60" rx="24" ry="14" fill="#0c0c0e" /><ellipse cx="28" cy="14" rx="16" ry="12" fill="#2a2220" /><ellipse cx="28" cy="29" rx="13" ry="16" fill="#db9478" /><rect x="16" y="18.5" width="24" height="7.5" fill="#2a3238" rx="3.5"/><ellipse cx="22.3" cy="22.3" rx="5" ry="3" fill="#a9c2cb" /><ellipse cx="33.7" cy="22.3" rx="5" ry="3" fill="#a9c2cb" /><ellipse cx="28" cy="36.5" rx="3.6" ry="1.2" fill="#a05848" /><ellipse cx="28" cy="41" rx="7" ry="3" fill="#c8846a" /></svg></div>
<div class="t" style="left:675.8px;top:1679.68px;font-size:24px;color:#28313c;font-weight:normal;letter-spacing:0.33px;-webkit-text-stroke:0.5px #28313c">Aurelio Hand</div>
<i class="ix" style="left:1315.6px;top:1678.2px"></i>
<i class="ix" style="left:1377.0px;top:1678.2px"></i>
<i class="ix" style="left:1438.5px;top:1678.2px"></i>
<i class="ic" style="left:1499.9px;top:1678.2px"></i>
<i class="ic" style="left:1561.4px;top:1678.2px"></i>
<i class="ix" style="left:1622.8px;top:1678.2px"></i>
<i class="ix" style="left:1684.3px;top:1678.2px"></i>
<i class="ic" style="left:1745.8px;top:1678.2px"></i>
<i class="ix" style="left:1807.2px;top:1678.2px"></i>
<i class="ix" style="left:1868.7px;top:1678.2px"></i>
<i class="ix" style="left:1933.0px;top:1678.2px"></i>
<i class="ix" style="left:1997.2px;top:1678.2px"></i>
<i class="ic" style="left:2061.6px;top:1678.2px"></i>
<i class="ix" style="left:2125.8px;top:1678.2px"></i>
<i class="ic" style="left:2190.2px;top:1678.2px"></i>
<i class="ix" style="left:2254.4px;top:1678.2px"></i>
<i class="ic" style="left:2318.8px;top:1678.2px"></i>
<i class="ix" style="left:2383.1px;top:1678.2px"></i>
<i class="ic" style="left:2447.3px;top:1678.2px"></i>
<i class="ic" style="left:2511.7px;top:1678.2px"></i>
<i class="ix" style="left:2575.9px;top:1678.2px"></i>
<i class="ic" style="left:2640.2px;top:1678.2px"></i>
<i class="ix" style="left:2704.6px;top:1678.2px"></i>
<i class="ix" style="left:2768.8px;top:1678.2px"></i>
<i class="ix" style="left:2833.2px;top:1678.2px"></i>
<i class="ic" style="left:2897.4px;top:1678.2px"></i>
<i class="ic" style="left:2961.8px;top:1678.2px"></i>
<i class="ic" style="left:3026.1px;top:1678.2px"></i>
<i class="ic" style="left:3090.4px;top:1678.2px"></i>
<i class="ic" style="left:3154.7px;top:1678.2px"></i>
<div class="t" style="right:74.59999999999991px;top:1681.08px;font-size:24px;color:#28313c">14 / <span style="color:#99a5b5">30</span></div>
<div class="abs" style="left:568px;top:1856px;width:2928px;height:2px;background:#eef0f3"></div>
<div class="abs av" id="av12" style="left:585px;top:1773px;width:56px;height:56px;border-radius:50%;border:1px solid #f3f4f6;background:#888;overflow:hidden"><svg width="56" height="56" viewBox="0 0 56 56"><rect x="0" y="0" width="56" height="56" fill="#a08242" /><rect x="0" y="0" width="12" height="56" fill="#7a7a30" /><rect x="44" y="0" width="12" height="56" fill="#8a8a38" /><ellipse cx="28" cy="15" rx="21" ry="14" fill="#b78f66" /><ellipse cx="14" cy="32" rx="7" ry="14" fill="#5a3c28" /><ellipse cx="42" cy="32" rx="7" ry="14" fill="#5a3c28" /><ellipse cx="28" cy="60" rx="24" ry="17" fill="#f01a2a" /><ellipse cx="28" cy="28" rx="9.5" ry="12" fill="#c98a62" /><ellipse cx="28" cy="36" rx="8.5" ry="6.5" fill="#2a180e" /><ellipse cx="28" cy="35" rx="4" ry="1.6" fill="#f0e8e0" /><ellipse cx="24" cy="25" rx="1.6" ry="1" fill="#2a180e" /><ellipse cx="32" cy="25" rx="1.6" ry="1" fill="#2a180e" /><ellipse cx="28" cy="20" rx="9" ry="3" fill="#3a2416" /></svg></div>
<div class="t" style="left:675.8px;top:1787.68px;font-size:24px;color:#28313c;font-weight:normal;letter-spacing:0.33px;-webkit-text-stroke:0.5px #28313c">Miss Amira Bogan MD</div>
<i class="ix" style="left:1315.6px;top:1786.2px"></i>
<i class="ix" style="left:1377.0px;top:1786.2px"></i>
<i class="ix" style="left:1438.5px;top:1786.2px"></i>
<i class="ic" style="left:1499.9px;top:1786.2px"></i>
<i class="ic" style="left:1561.4px;top:1786.2px"></i>
<i class="ic" style="left:1622.8px;top:1786.2px"></i>
<i class="ix" style="left:1684.3px;top:1786.2px"></i>
<i class="ic" style="left:1745.8px;top:1786.2px"></i>
<i class="ix" style="left:1807.2px;top:1786.2px"></i>
<i class="ic" style="left:1868.7px;top:1786.2px"></i>
<i class="ic" style="left:1933.0px;top:1786.2px"></i>
<i class="ic" style="left:1997.2px;top:1786.2px"></i>
<i class="ic" style="left:2061.6px;top:1786.2px"></i>
<i class="ix" style="left:2125.8px;top:1786.2px"></i>
<i class="ix" style="left:2190.2px;top:1786.2px"></i>
<i class="ic" style="left:2254.4px;top:1786.2px"></i>
<i class="ic" style="left:2318.8px;top:1786.2px"></i>
<i class="ix" style="left:2383.1px;top:1786.2px"></i>
<i class="ix" style="left:2447.3px;top:1786.2px"></i>
<i class="ix" style="left:2511.7px;top:1786.2px"></i>
<i class="ix" style="left:2575.9px;top:1786.2px"></i>
<i class="ix" style="left:2640.2px;top:1786.2px"></i>
<i class="ix" style="left:2704.6px;top:1786.2px"></i>
<i class="ix" style="left:2768.8px;top:1786.2px"></i>
<i class="ix" style="left:2833.2px;top:1786.2px"></i>
<i class="ix" style="left:2897.4px;top:1786.2px"></i>
<i class="ix" style="left:2961.8px;top:1786.2px"></i>
<i class="ix" style="left:3026.1px;top:1786.2px"></i>
<i class="ic" style="left:3090.4px;top:1786.2px"></i>
<i class="ic" style="left:3154.7px;top:1786.2px"></i>
<div class="t" style="right:74.59999999999991px;top:1789.08px;font-size:24px;color:#28313c">12 / <span style="color:#99a5b5">30</span></div>
<div class="abs" style="left:568px;top:1964px;width:2928px;height:2px;background:#eef0f3"></div>
<div class="abs av" id="av13" style="left:585px;top:1881px;width:56px;height:56px;border-radius:50%;border:1px solid #f3f4f6;background:#888;overflow:hidden"><svg width="56" height="56" viewBox="0 0 56 56"><rect x="0" y="0" width="56" height="56" fill="#3b210d" /><rect x="0" y="0" width="56" height="12" fill="#1c0f06" /><ellipse cx="27" cy="15" rx="15" ry="10" fill="#0e0805" /><ellipse cx="34" cy="56" rx="26" ry="16" fill="#9a6a38" /><ellipse cx="10" cy="50" rx="12" ry="14" fill="#5a3014" /><ellipse cx="27" cy="28" rx="11.5" ry="13.5" fill="#a97142" /><rect x="16" y="21" width="23" height="6.5" fill="#0a0605" rx="3"/><ellipse cx="27" cy="37" rx="3.6" ry="1.2" fill="#70402a" /><path d="M30 56L54 40" stroke="#c0b4a0" stroke-width="2.500"/></svg></div>
<div class="t" style="left:675.8px;top:1895.68px;font-size:24px;color:#28313c;font-weight:normal;letter-spacing:0.33px;-webkit-text-stroke:0.5px #28313c">Tre Lueilwitz</div>
<i class="ix" style="left:1315.6px;top:1894.2px"></i>
<i class="ix" style="left:1377.0px;top:1894.2px"></i>
<i class="ix" style="left:1438.5px;top:1894.2px"></i>
<i class="ic" style="left:1499.9px;top:1894.2px"></i>
<i class="ix" style="left:1561.4px;top:1894.2px"></i>
<i class="ic" style="left:1622.8px;top:1894.2px"></i>
<i class="ic" style="left:1684.3px;top:1894.2px"></i>
<i class="ic" style="left:1745.8px;top:1894.2px"></i>
<i class="ix" style="left:1807.2px;top:1894.2px"></i>
<i class="ix" style="left:1868.7px;top:1894.2px"></i>
<i class="ix" style="left:1933.0px;top:1894.2px"></i>
<i class="ix" style="left:1997.2px;top:1894.2px"></i>
<i class="ix" style="left:2061.6px;top:1894.2px"></i>
<i class="ix" style="left:2125.8px;top:1894.2px"></i>
<i class="ix" style="left:2190.2px;top:1894.2px"></i>
<i class="ic" style="left:2254.4px;top:1894.2px"></i>
<i class="ix" style="left:2318.8px;top:1894.2px"></i>
<i class="ic" style="left:2383.1px;top:1894.2px"></i>
<i class="ic" style="left:2447.3px;top:1894.2px"></i>
<i class="ix" style="left:2511.7px;top:1894.2px"></i>
<i class="ix" style="left:2575.9px;top:1894.2px"></i>
<i class="ic" style="left:2640.2px;top:1894.2px"></i>
<i class="ix" style="left:2704.6px;top:1894.2px"></i>
<i class="ix" style="left:2768.8px;top:1894.2px"></i>
<i class="ix" style="left:2833.2px;top:1894.2px"></i>
<i class="ic" style="left:2897.4px;top:1894.2px"></i>
<i class="ic" style="left:2961.8px;top:1894.2px"></i>
<i class="ix" style="left:3026.1px;top:1894.2px"></i>
<i class="ic" style="left:3090.4px;top:1894.2px"></i>
<i class="ic" style="left:3154.7px;top:1894.2px"></i>
<div class="t" style="right:74.59999999999991px;top:1897.08px;font-size:24px;color:#28313c">12 / <span style="color:#99a5b5">30</span></div>
<div class="abs" style="left:568px;top:2072px;width:2928px;height:2px;background:#eef0f3"></div>
<div class="abs av" id="av14" style="left:585px;top:1989px;width:56px;height:56px;border-radius:50%;border:1px solid #f3f4f6;background:#888;overflow:hidden"><svg width="56" height="56" viewBox="0 0 56 56"><rect x="0" y="0" width="56" height="56" fill="#3b210d" /><rect x="0" y="0" width="56" height="12" fill="#1c0f06" /><ellipse cx="27" cy="15" rx="15" ry="10" fill="#0e0805" /><ellipse cx="34" cy="56" rx="26" ry="16" fill="#9a6a38" /><ellipse cx="10" cy="50" rx="12" ry="14" fill="#5a3014" /><ellipse cx="27" cy="28" rx="11.5" ry="13.5" fill="#a97142" /><rect x="16" y="21" width="23" height="6.5" fill="#0a0605" rx="3"/><ellipse cx="27" cy="37" rx="3.6" ry="1.2" fill="#70402a" /><path d="M30 56L54 40" stroke="#c0b4a0" stroke-width="2.500"/></svg></div>
<div class="t" style="left:675.8px;top:2003.68px;font-size:24px;color:#28313c;font-weight:normal;letter-spacing:0.33px;-webkit-text-stroke:0.5px #28313c">Alexis Ward</div>
<i class="ix" style="left:1315.6px;top:2002.2px"></i>
<i class="ix" style="left:1377.0px;top:2002.2px"></i>
<i class="ix" style="left:1438.5px;top:2002.2px"></i>
<i class="ic" style="left:1499.9px;top:2002.2px"></i>
<i class="ic" style="left:1561.4px;top:2002.2px"></i>
<i class="ix" style="left:1622.8px;top:2002.2px"></i>
<i class="ix" style="left:1684.3px;top:2002.2px"></i>
<i class="ic" style="left:1745.8px;top:2002.2px"></i>
<i class="ic" style="left:1807.2px;top:2002.2px"></i>
<i class="ix" style="left:1868.7px;top:2002.2px"></i>
<i class="ix" style="left:1933.0px;top:2002.2px"></i>
<i class="ic" style="left:1997.2px;top:2002.2px"></i>
<i class="ix" style="left:2061.6px;top:2002.2px"></i>
<i class="ic" style="left:2125.8px;top:2002.2px"></i>
<i class="ix" style="left:2190.2px;top:2002.2px"></i>
<i class="ix" style="left:2254.4px;top:2002.2px"></i>
<i class="ix" style="left:2318.8px;top:2002.2px"></i>
<i class="ix" style="left:2383.1px;top:2002.2px"></i>
<i class="ic" style="left:2447.3px;top:2002.2px"></i>
<i class="ic" style="left:2511.7px;top:2002.2px"></i>
<i class="ic" style="left:2575.9px;top:2002.2px"></i>
<i class="ix" style="left:2640.2px;top:2002.2px"></i>
<i class="ic" style="left:2704.6px;top:2002.2px"></i>
<i class="ix" style="left:2768.8px;top:2002.2px"></i>
<i class="ic" style="left:2833.2px;top:2002.2px"></i>
<i class="ix" style="left:2897.4px;top:2002.2px"></i>
<i class="ix" style="left:2961.8px;top:2002.2px"></i>
<i class="ix" style="left:3026.1px;top:2002.2px"></i>
<i class="ix" style="left:3090.4px;top:2002.2px"></i>
<i class="ic" style="left:3154.7px;top:2002.2px"></i>
<div class="t" style="right:74.59999999999991px;top:2005.08px;font-size:24px;color:#28313c">12 / <span style="color:#99a5b5">30</span></div>
<div class="abs" style="left:0;top:0;width:480px;height:2032px;background:#171f29"></div>
<div class="abs" style="left:0;top:132px;width:480px;height:2px;background:#252e3b"></div>
<div class="t" style="left:40px;top:27.76px;font-size:31px;color:#fff;font-weight:bold;">Worksuite</div>
<svg style="position:absolute;left:210.75px;top:33.25px" width="24" height="24" viewBox="0 0 16 16" fill="#fff"><path fill-rule="evenodd" d="M1.646 4.646a.5.5 0 0 1 .708 0L8 10.293l5.646-5.647a.5.5 0 0 1 .708.708l-6 6a.5.5 0 0 1-.708 0l-6-6a.5.5 0 0 1 0-.708z"/></svg>
<div class="abs" style="left:40px;top:72px;width:24px;height:24px;border-radius:50%;background:#39e500"></div>
<div class="t" style="left:80.4px;top:73.99px;font-size:26px;color:#99a5b5;font-weight:normal;letter-spacing:-0.2px">Mayra Hansen PhD</div>
<div class="abs" style="left:376px;top:34px;width:64px;height:64px;border-radius:7px;background:#ffc812"></div>
<svg class="abs" style="left:376px;top:34px" width="64" height="64" viewBox="0 0 64 64" fill="#fff"><path d="M7.1 16.3h9l7.4 29.1-3.1 7.4h-2.2z"/><path d="M32.4 15l15.2 29.8-2.8 8h-1.5L31.8 28.700 26.600 40.500l-2.500-.6-.6-6.800z"/><path d="M48.800 16.400h8.400l-9 25.300-3.100-5.500-.9-5.600z"/></svg>
<svg style="position:absolute;left:40px;top:168.5px" width="32" height="32" viewBox="0 0 16 16" fill="#99a5b5"><path fill-rule="evenodd" d="M2 13.5V7h1v6.5a.5.5 0 0 0 .5.5h9a.5.5 0 0 0 .5-.5V7h1v6.5a1.5 1.5 0 0 1-1.5 1.5h-9A1.5 1.5 0 0 1 2 13.5zm11-11V6l-2-2V2.5a.5.5 0 0 1 .5-.5h1a.5.5 0 0 1 .5.5z"/><path fill-rule="evenodd" d="M7.293 1.5a1 1 0 0 1 1.414 0l6.647 6.646a.5.5 0 0 1-.708.708L8 2.207 1.354 8.854a.5.5 0 1 1-.708-.708L7.293 1.5z"/></svg>
<div class="t" style="left:113px;top:166.60px;font-size:30px;color:#99a5b5;font-weight:normal;">Dashboard</div>
<svg style="position:absolute;left:428px;top:169px" width="24" height="24" viewBox="0 0 16 16" fill="#99a5b5"><path fill-rule="evenodd" d="M4.646 1.646a.5.5 0 0 1 .708 0l6 6a.5.5 0 0 1 0 .708l-6 6a.5.5 0 0 1-.708-.708L10.293 8 4.646 2.354a.5.5 0 0 1 0-.708z"/></svg>
<div class="abs" style="left:0;top:230px;width:480px;height:2px;background:#252e3b"></div>
<svg style="position:absolute;left:40px;top:264px" width="32" height="32" viewBox="0 0 16 16" fill="#99a5b5"><path d="M8 8a3 3 0 1 0 0-6 3 3 0 0 0 0 6zm2-3a2 2 0 1 1-4 0 2 2 0 0 1 4 0zm4 8c0 1-1 1-1 1H3s-1 0-1-1 1-4 6-4 6 3 6 4zm-1-.004c-.001-.246-.154-.986-.832-1.664C11.516 10.68 10.289 10 8 10c-2.29 0-3.516.68-4.168 1.332-.678.678-.83 1.418-.832 1.664h10z"/></svg>
<div class="t" style="left:113px;top:262.61px;font-size:30px;color:#99a5b5;font-weight:normal;">Leads</div>
<div class="abs" style="left:0;top:326px;width:480px;height:2px;background:#252e3b"></div>
<svg style="position:absolute;left:40px;top:360px" width="32" height="32" viewBox="0 0 16 16" fill="#fff"><path d="M15 14s1 0 1-1-1-4-5-4-5 3-5 4 1 1 1 1h8zm-7.978-1A.261.261 0 0 1 7 12.996c.001-.264.167-1.03.76-1.72C8.312 10.629 9.282 10 11 10c1.717 0 2.687.63 3.24 1.276.593.69.758 1.457.76 1.72l-.008.002a.274.274 0 0 1-.014.002H7.022zM11 7a2 2 0 1 0 0-4 2 2 0 0 0 0 4zm3-2a3 3 0 1 1-6 0 3 3 0 0 1 6 0zM6.936 9.28a5.88 5.88 0 0 0-1.23-.247A7.35 7.35 0 0 0 5 9c-4 0-5 3-5 4 0 .667.333 1 1 1h4.216A2.238 2.238 0 0 1 5 13c0-1.01.377-2.042 1.09-2.904.243-.294.526-.569.846-.816zM4.92 10A5.493 5.493 0 0 0 4 13H1c0-.26.164-1.03.76-1.724.545-.636 1.492-1.256 3.16-1.275zM1.5 5.5a3 3 0 1 1 6 0 3 3 0 0 1-6 0zm3-2a2 2 0 1 0 0 4 2 2 0 0 0 0-4z"/></svg>
<div class="t" style="left:113px;top:357.61px;font-size:30px;color:#fff;font-weight:normal;">HR</div>
<svg style="position:absolute;left:428px;top:361px" width="24" height="24" viewBox="0 0 16 16" fill="#fff"><path fill-rule="evenodd" d="M1.646 4.646a.5.5 0 0 1 .708 0L8 10.293l5.646-5.647a.5.5 0 0 1 .708.708l-6 6a.5.5 0 0 1-.708 0l-6-6a.5.5 0 0 1 0-.708z"/></svg>
<svg style="position:absolute;left:40px;top:674px" width="32" height="32" viewBox="0 0 16 16" fill="#99a5b5"><path d="M6.5 1A1.5 1.5 0 0 0 5 2.5V3H1.5A1.5 1.5 0 0 0 0 4.5v8A1.5 1.5 0 0 0 1.5 14h13a1.5 1.5 0 0 0 1.5-1.5v-8A1.5 1.5 0 0 0 14.5 3H11v-.5A1.5 1.5 0 0 0 9.500 1h-3zm0 1h3a.5.5 0 0 1 .5.5V3H6v-.5a.5.5 0 0 1 .5-.5zm1.886 6.914L15 7.151V12.5a.5.5 0 0 1-.5.5h-13a.5.5 0 0 1-.5-.5V7.150l6.614 1.764a1.5 1.5 0 0 0 .772 0zM1.5 4h13a.5.5 0 0 1 .5.5v1.616L8.129 7.948a.5.5 0 0 1-.258 0L1 6.116V4.500a.5.5 0 0 1 .5-.5z"/></svg>
<div class="t" style="left:113px;top:672.61px;font-size:30px;color:#99a5b5;font-weight:normal;">Work</div>
<svg style="position:absolute;left:428px;top:675px" width="24" height="24" viewBox="0 0 16 16" fill="#99a5b5"><path fill-rule="evenodd" d="M4.646 1.646a.5.5 0 0 1 .708 0l6 6a.5.5 0 0 1 0 .708l-6 6a.5.5 0 0 1-.708-.708L10.293 8 4.646 2.354a.5.5 0 0 1 0-.708z"/></svg>
<div class="abs" style="left:0;top:736px;width:480px;height:2px;background:#252e3b"></div>
<svg style="position:absolute;left:40px;top:770px" width="32" height="32" viewBox="0 0 16 16" fill="#99a5b5"><path d="M4 10.781c.148 1.667 1.513 2.850 3.591 3.003V15h1.043v-1.216c2.270-.179 3.678-1.438 3.678-3.300 0-1.590-.947-2.510-2.956-3.028l-.722-.187V3.467c1.122.110 1.879.714 2.070 1.616h1.470c-.166-1.600-1.540-2.748-3.540-2.875V1H7.591v1.233c-1.939.230-3.270 1.472-3.270 3.156 0 1.454.966 2.483 2.661 2.917l.610.162v4.031c-1.149-.170-1.940-.800-2.131-1.718H4zm3.391-3.836c-1.043-.263-1.600-.825-1.600-1.616 0-.944.704-1.641 1.800-1.828v3.495l-.200-.050zm1.591 1.872c1.287.323 1.852.859 1.852 1.769 0 1.097-.826 1.828-2.200 1.939V8.730l.348.086z"/></svg>
<div class="t" style="left:113px;top:768.61px;font-size:30px;color:#99a5b5;font-weight:normal;">Finance</div>
<svg style="position:absolute;left:428px;top:771px" width="24" height="24" viewBox="0 0 16 16" fill="#99a5b5"><path fill-rule="evenodd" d="M4.646 1.646a.5.5 0 0 1 .708 0l6 6a.5.5 0 0 1 0 .708l-6 6a.5.5 0 0 1-.708-.708L10.293 8 4.646 2.354a.5.5 0 0 1 0-.708z"/></svg>
<div class="abs" style="left:0;top:832px;width:480px;height:2px;background:#252e3b"></div>
<svg style="position:absolute;left:40px;top:866px" width="32" height="32" viewBox="0 0 16 16" fill="#99a5b5"><path d="M8 1a5 5 0 0 0-5 5v1h1a1 1 0 0 1 1 1v3a1 1 0 0 1-1 1H3a1 1 0 0 1-1-1V6a6 6 0 1 1 12 0v6a2.5 2.5 0 0 1-2.5 2.5H9.366a1 1 0 0 1-.866.5h-1a1 1 0 1 1 0-2h1a1 1 0 0 1 .866.5H11.5A1.5 1.5 0 0 0 13 12h-1a1 1 0 0 1-1-1V8a1 1 0 0 1 1-1h1V6a5 5 0 0 0-5-5z"/></svg>
<div class="t" style="left:113px;top:864.61px;font-size:30px;color:#99a5b5;font-weight:normal;">Tickets</div>
<div class="abs" style="left:0;top:928px;width:480px;height:2px;background:#252e3b"></div>
<svg style="position:absolute;left:40px;top:962px" width="32" height="32" viewBox="0 0 16 16" fill="#99a5b5"><path d="M11 6.5a.5.5 0 0 1 .5-.5h1a.5.5 0 0 1 .5.5v1a.5.5 0 0 1-.5.5h-1a.5.5 0 0 1-.5-.5v-1z"/><path d="M3.5 0a.5.5 0 0 1 .5.5V1h8V.5a.5.5 0 0 1 1 0V1h1a2 2 0 0 1 2 2v11a2 2 0 0 1-2 2H2a2 2 0 0 1-2-2V3a2 2 0 0 1 2-2h1V.5a.5.5 0 0 1 .5-.5zM1 4v10a1 1 0 0 0 1 1h12a1 1 0 0 0 1-1V4H1z"/></svg>
<div class="t" style="left:113px;top:960.61px;font-size:30px;color:#99a5b5;font-weight:normal;">Events</div>
<div class="abs" style="left:0;top:1024px;width:480px;height:2px;background:#252e3b"></div>
<svg style="position:absolute;left:40px;top:1058px" width="32" height="32" viewBox="0 0 16 16" fill="#99a5b5"><path d="M14 1a1 1 0 0 1 1 1v8a1 1 0 0 1-1 1H4.414A2 2 0 0 0 3 11.586l-2 2V2a1 1 0 0 1 1-1h12zM2 0a2 2 0 0 0-2 2v12.793a.5.5 0 0 0 .854.353l2.853-2.853A1 1 0 0 1 4.414 12H14a2 2 0 0 0 2-2V2a2 2 0 0 0-2-2H2z"/><path d="M3 3.500a.5.5 0 0 1 .5-.5h9a.5.5 0 0 1 0 1h-9a.5.5 0 0 1-.5-.5zM3 6a.5.5 0 0 1 .5-.5h9a.5.5 0 0 1 0 1h-9A.5.5 0 0 1 3 6zm0 2.500a.5.5 0 0 1 .5-.5h5a.5.5 0 0 1 0 1h-5a.5.5 0 0 1-.5-.5z"/></svg>
<div class="t" style="left:113px;top:1056.61px;font-size:30px;color:#99a5b5;font-weight:normal;">Messages</div>
<div class="abs" style="left:0;top:1120px;width:480px;height:2px;background:#252e3b"></div>
<svg style="position:absolute;left:40px;top:1154px" width="32" height="32" viewBox="0 0 16 16" fill="#99a5b5"><path d="M4 1.500H3a2 2 0 0 0-2 2V14a2 2 0 0 0 2 2h10a2 2 0 0 0 2-2V3.500a2 2 0 0 0-2-2h-1v1h1a1 1 0 0 1 1 1V14a1 1 0 0 1-1 1H3a1 1 0 0 1-1-1V3.500a1 1 0 0 1 1-1h1v-1z"/><path d="M9.500 1a.5.5 0 0 1 .5.5v1a.5.5 0 0 1-.5.5h-3a.5.5 0 0 1-.5-.5v-1a.5.5 0 0 1 .5-.5h3zm-3-1A1.500 1.500 0 0 0 5 1.500v1A1.500 1.500 0 0 0 6.500 4h3A1.500 1.500 0 0 0 11 2.500v-1A1.500 1.500 0 0 0 9.500 0h-3z"/></svg>
<div class="t" style="left:113px;top:1152.61px;font-size:30px;color:#99a5b5;font-weight:normal;">Notice Board</div>
<div class="abs" style="left:0;top:1216px;width:480px;height:2px;background:#252e3b"></div>
<svg style="position:absolute;left:40px;top:1250px" width="32" height="32" viewBox="0 0 16 16" fill="#99a5b5"><path d="M8 4.754a3.246 3.246 0 1 0 0 6.492 3.246 3.246 0 0 0 0-6.492zM5.754 8a2.246 2.246 0 1 1 4.492 0 2.246 2.246 0 0 1-4.492 0z"/><path d="M9.796 1.343c-.527-1.790-3.065-1.790-3.592 0l-.094.319a.873.873 0 0 1-1.255.520l-.292-.160c-1.640-.892-3.433.902-2.540 2.541l.159.292a.873.873 0 0 1-.520 1.255l-.319.094c-1.790.527-1.790 3.065 0 3.592l.319.094a.873.873 0 0 1 .520 1.255l-.160.292c-.892 1.640.901 3.434 2.541 2.540l.292-.159a.873.873 0 0 1 1.255.520l.094.319c.527 1.790 3.065 1.790 3.592 0l.094-.319a.873.873 0 0 1 1.255-.520l.292.160c1.640.893 3.434-.902 2.540-2.541l-.159-.292a.873.873 0 0 1 .520-1.255l.319-.094c1.790-.527 1.790-3.065 0-3.592l-.319-.094a.873.873 0 0 1-.520-1.255l.160-.292c.893-1.640-.902-3.433-2.541-2.540l-.292.159a.873.873 0 0 1-1.255-.520l-.094-.319zm-2.633.283c.246-.835 1.428-.835 1.674 0l.094.319a1.873 1.873 0 0 0 2.693 1.115l.291-.160c.764-.415 1.600.420 1.184 1.185l-.159.292a1.873 1.873 0 0 0 1.116 2.692l.318.094c.835.246.835 1.428 0 1.674l-.319.094a1.873 1.873 0 0 0-1.115 2.693l.160.291c.415.764-.420 1.600-1.185 1.184l-.291-.159a1.873 1.873 0 0 0-2.693 1.116l-.094.318c-.246.835-1.428.835-1.674 0l-.094-.319a1.873 1.873 0 0 0-2.692-1.115l-.292.160c-.764.415-1.600-.420-1.184-1.185l.159-.291A1.873 1.873 0 0 0 1.945 8.930l-.319-.094c-.835-.246-.835-1.428 0-1.674l.319-.094A1.873 1.873 0 0 0 3.060 4.377l-.160-.292c-.415-.764.420-1.600 1.185-1.184l.292.159a1.873 1.873 0 0 0 2.692-1.115l.094-.319z"/></svg>
<div class="t" style="left:113px;top:1248.61px;font-size:30px;color:#99a5b5;font-weight:normal;">Settings</div>
<div class="abs" style="left:0;top:1312px;width:480px;height:2px;background:#252e3b"></div>
<div class="abs" style="left:0;top:640px;width:480px;height:2px;background:#252e3b"></div>
<div class="t" style="left:111.3px;top:440.50px;font-size:28px;color:#99a5b5;font-weight:normal;">Leaves</div>
<div class="t" style="left:111.3px;top:508.30px;font-size:28px;color:#fff;font-weight:normal;">Attendance</div>
<div class="t" style="left:111.3px;top:574.30px;font-size:28px;color:#99a5b5;font-weight:normal;">Holiday</div>
<div class="abs" style="left:0;top:1936px;width:480px;height:2px;background:#252e3b"></div>
<svg style="position:absolute;left:31.5px;top:1972px;" width="17.50" height="28" viewBox="0 0 320 512" fill="#99a5b5"><path d="M34.520 239.030L228.870 44.690c9.370-9.370 24.570-9.370 33.940 0l22.670 22.670c9.360 9.360 9.370 24.520.040 33.900L131.490 256l154.020 154.750c9.340 9.380 9.320 24.540-.040 33.900l-22.670 22.670c-9.370 9.370-24.570 9.370-33.940 0L34.520 272.970c-9.370-9.370-9.370-24.570 0-33.940z"/></svg>
<div class="t" style="right:3108.3px;top:1973.80px;font-size:21.5px;color:#616e80;font-weight:normal;">ver 5.0.1</div>
<div class="abs" style="left:0;top:0;width:3554px;height:2032px;background:rgba(0,0,0,0.25)"></div>
<div class="abs" style="left:652px;top:56px;width:2276px;height:1026px;border:2px solid rgba(0,0,0,0.2);border-radius:10px 10px 0 0;background:#e8edf1;overflow:hidden;background-clip:padding-box"><div style="height:118px;background:#fff;border-bottom:2px solid #dfe3e8"></div></div>
<div class="t" style="left:686px;top:101.23px;font-size:36px;color:#28313c;font-weight:normal;letter-spacing:0.78px;-webkit-text-stroke:0.6px #28313c">Attendance Details</div>
<svg style="position:absolute;left:2873px;top:104px;" width="21.66" height="31.5" viewBox="0 0 352 512" fill="#7b7b7b"><path d="M242.720 256l100.070-100.070c12.280-12.280 12.280-32.190 0-44.480l-22.240-22.240c-12.280-12.280-32.190-12.280-44.480 0L176 189.280 75.930 89.210c-12.280-12.280-32.190-12.280-44.480 0L9.210 111.450c-12.280 12.280-12.280 32.190 0 44.480L109.280 256 9.210 356.070c-12.280 12.280-12.280 32.190 0 44.480l22.240 22.240c12.280 12.280 32.200 12.280 44.480 0L176 322.720l100.070 100.070c12.280 12.280 32.200 12.280 44.480 0l22.240-22.240c12.280-12.280 12.280-32.190 0-44.480L242.720 256z"/></svg>
<div class="abs" style="left:685.5px;top:210px;width:1076px;height:842px;background:#fff;border-radius:8px"></div>
<div class="t" style="left:726px;top:254.53px;font-size:36px;color:#28313c;font-weight:normal;letter-spacing:0.2px;-webkit-text-stroke:0.9px #28313c">Date - 05-09-2021</div>
<div class="abs" style="left:726px;top:374px;width:996px;height:162px;background:#f8f9fb;border:2px solid #e1e4e8;border-radius:8px;box-sizing:border-box"></div>
<div class="t" style="left:760.3px;top:409.69px;font-size:26px;color:#28313c;font-weight:normal;letter-spacing:0.4px;-webkit-text-stroke:0.65px #28313c">Clock In</div>
<div class="t" style="left:760.3px;top:465.00px;font-size:28px;color:#28313c;font-weight:normal;">05:30 am</div>
<div class="abs" style="left:1104px;top:568px;width:220px;height:220px;border:10px solid #1d82f5;border-radius:50%"></div>
<div class="t" style="left:1161px;top:669.93px;font-size:36px;color:#28313c;font-weight:normal;">11.0 hrs</div>
<div class="abs" style="left:726px;top:848px;width:996px;height:164px;background:#f8f9fb;border:2px solid #e1e4e8;border-radius:8px;box-sizing:border-box"></div>
<div class="t" style="left:760.3px;top:884.29px;font-size:26px;color:#28313c;font-weight:normal;letter-spacing:0.4px;-webkit-text-stroke:0.65px #28313c">Clock Out</div>
<div class="t" style="left:760.3px;top:940.60px;font-size:28px;color:#28313c;font-weight:normal;">04:30 pm</div>
<div class="abs" style="left:1822px;top:210px;width:1076px;height:456px;background:#fff;border-radius:8px"></div>
<div class="t" style="left:1862.4px;top:253.53px;font-size:36px;color:#28313c;font-weight:normal;letter-spacing:1px;-webkit-text-stroke:0.9px #28313c">Activity</div>
<div class="abs" style="left:1860px;top:384px;width:4px;height:242px;background:#e8eef3"></div>
<div class="abs" style="left:1852px;top:374px;width:12px;height:12px;border:4px solid #1d82f5;border-radius:50%;background:#fff"></div>
<div class="abs" style="left:1852px;top:500.2px;width:12px;height:12px;border:4px solid #1d82f5;border-radius:50%;background:#fff"></div>
<div class="t" style="left:1892.5px;top:383.79px;font-size:26px;color:#28313c;font-weight:normal;">Clock In</div>
<svg style="position:absolute;left:1892.3px;top:432px;" width="23.20" height="23.2" viewBox="0 0 512 512" fill="#b8b8b8"><path d="M256 8C119 8 8 119 8 256s111 248 248 248 248-111 248-248S393 8 256 8zm57.100 350.100L224.900 294c-3.100-2.300-4.900-5.900-4.900-9.700V116c0-6.600 5.400-12 12-12h48c6.600 0 12 5.400 12 12v137.700l63.500 46.200c5.400 3.900 6.500 11.400 2.600 16.800l-28.200 38.800c-3.900 5.300-11.400 6.500-16.800 2.600z"/></svg>
<div class="t" style="left:1923px;top:433.98px;font-size:24px;color:#b8b8b8;font-weight:normal;">05:30 am</div>
<svg style="position:absolute;left:2045.7px;top:432px;" width="18.00" height="24" viewBox="0 0 384 512" fill="#b8b8b8"><path d="M172.268 501.670C26.970 291.031 0 269.413 0 192 0 85.961 85.961 0 192 0s192 85.961 192 192c0 77.413-26.970 99.031-172.268 309.670-9.535 13.774-29.930 13.773-39.464 0zM192 272c44.183 0 80-35.817 80-80s-35.817-80-80-80-80 35.817-80 80 35.817 80 80 80z"/></svg>
<div class="t" style="left:2070.6px;top:433.98px;font-size:24px;color:#b8b8b8;font-weight:normal;">office</div>
<svg style="position:absolute;left:2827px;top:379px;" width="29.50" height="29.5" viewBox="0 0 512 512" fill="#99a5b5"><path d="M328 256c0 39.800-32.200 72-72 72s-72-32.200-72-72 32.200-72 72-72 72 32.200 72 72zm104-72c-39.800 0-72 32.200-72 72s32.200 72 72 72 72-32.200 72-72-32.200-72-72-72zm-352 0c-39.800 0-72 32.200-72 72s32.200 72 72 72 72-32.200 72-72-32.200-72-72-72z"/></svg>
<div class="t" style="left:1892.5px;top:510.19px;font-size:26px;color:#28313c;font-weight:normal;">Clock Out</div>
<svg style="position:absolute;left:1892.3px;top:558.2px;" width="23.20" height="23.2" viewBox="0 0 512 512" fill="#b8b8b8"><path d="M256 8C119 8 8 119 8 256s111 248 248 248 248-111 248-248S393 8 256 8zm57.100 350.100L224.900 294c-3.100-2.300-4.900-5.900-4.900-9.700V116c0-6.600 5.400-12 12-12h48c6.600 0 12 5.400 12 12v137.700l63.500 46.200c5.400 3.900 6.500 11.400 2.600 16.800l-28.200 38.800c-3.900 5.300-11.400 6.500-16.800 2.600z"/></svg>
<div class="t" style="left:1923px;top:560.18px;font-size:24px;color:#b8b8b8;font-weight:normal;">04:30 pm</div>
</div>
<script>(function(){var w=window.innerWidth;if(w&&Math.abs(w-3554)>2){var r=document.getElementById("root");r.style.zoom=w/3554;document.body.style.width=w+"px";document.body.style.height=Math.round(2032*w/3554)+"px";}})();</script>
</body></html>
